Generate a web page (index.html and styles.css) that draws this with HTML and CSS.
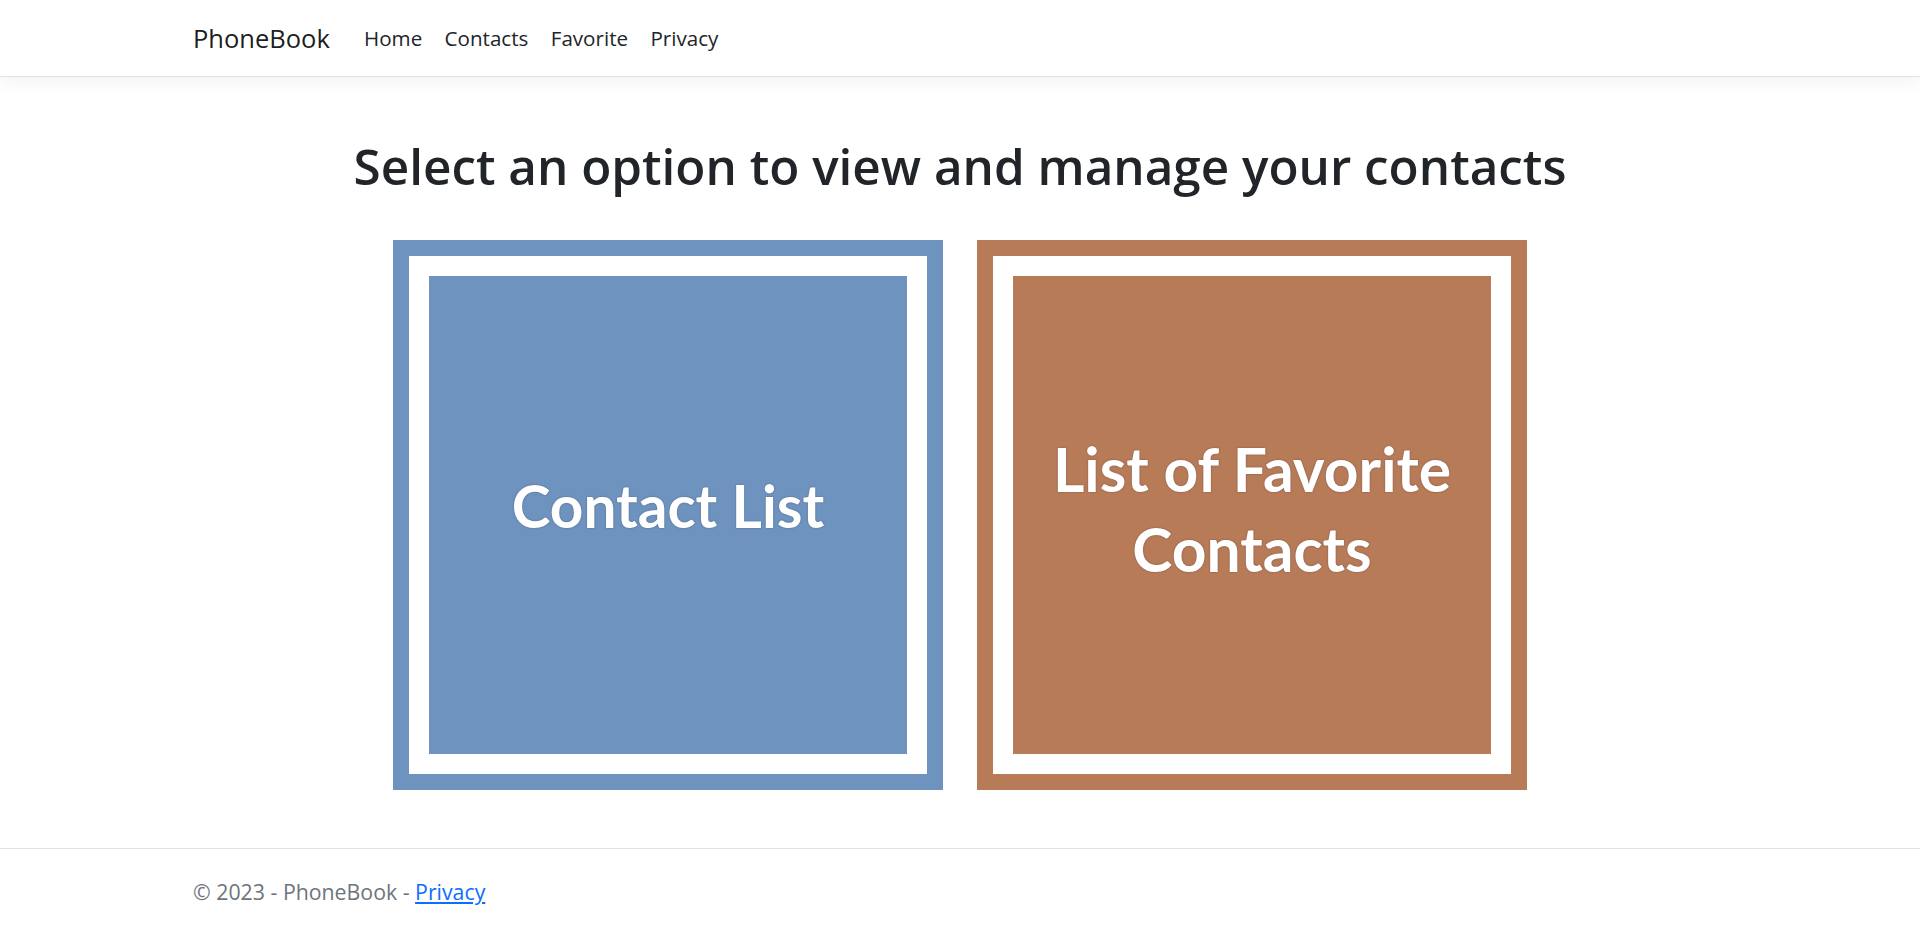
FILE: index.html
```html
<!DOCTYPE html>
<html lang="en">
<head>
<meta charset="utf-8">
<title>Home Page - PhoneBook</title>
<link rel="stylesheet" href="styles.css">
</head>
<body>
<div class="page">
  <header class="navbar">
    <div class="container nav-inner">
      <a class="brand" href="#">PhoneBook</a>
      <nav class="nav-links">
        <a class="nav-link" href="#">Home</a>
        <a class="nav-link" href="#">Contacts</a>
        <a class="nav-link" href="#">Favorite</a>
        <a class="nav-link" href="#">Privacy</a>
      </nav>
    </div>
  </header>
  <main class="main">
    <h1 class="title">Select an option to view and manage your contacts</h1>
    <div class="cards">
      <a class="card card-blue" href="#">
        <span class="frame"><span class="inner"><span class="card-text card-text-one">Contact List</span></span></span>
      </a>
      <a class="card card-brown" href="#">
        <span class="frame"><span class="inner"><span class="card-text card-text-two">List of Favorite<br>Contacts</span></span></span>
      </a>
    </div>
  </main>
  <footer class="footer">
    <div class="container footer-inner">© 2023 - PhoneBook - <a class="footer-link" href="#">Privacy</a></div>
  </footer>
</div>
</body>
</html>
```

FILE: styles.css
```css
html, body {
  margin: 0;
  padding: 0;
  background: #ffffff;
}

body {
  font-family: "Open Sans", "Noto Sans", sans-serif;
  color: #212529;
}

.page {
  display: flex;
  flex-direction: column;
  min-height: 928px;
}

.container {
  width: 1534px;
  margin: 0 auto;
}

.navbar {
  height: 76px;
  border-bottom: 1px solid #dee2e6;
  box-shadow: 0 5px 17px rgba(0, 0, 0, 0.05);
  background: #ffffff;
  display: flex;
  align-items: center;
}

.nav-inner {
  display: flex;
  align-items: center;
}

.brand {
  font-size: 25.5px;
  line-height: 36px;
  color: rgba(0, 0, 0, 0.9);
  text-decoration: none;
  margin-right: 23px;
}

.nav-links {
  display: flex;
  align-items: center;
}

.nav-link {
  font-size: 20.6px;
  line-height: 30px;
  color: #212529;
  text-decoration: none;
  padding: 0 11.2px;
}

.main {
  padding-top: 60px;
}

.title {
  margin: 0;
  text-align: center;
  font-size: 49.4px;
  line-height: 58px;
  font-weight: 600;
  color: #212529;
}

.cards {
  margin-top: 45px;
  display: flex;
  justify-content: center;
  gap: 34px;
}

.card {
  width: 550px;
  height: 550px;
  box-sizing: border-box;
  padding: 16px;
  display: block;
  text-decoration: none;
}

.card-blue { background: #6f93bf; }
.card-brown { background: #b87b58; }

.frame {
  display: block;
  width: 100%;
  height: 100%;
  box-sizing: border-box;
  border: 20px solid #ffffff;
}

.card-blue .frame { background: #6f93bf; }
.card-brown .frame { background: #b87b58; }

.inner {
  display: flex;
  width: 100%;
  height: 100%;
  align-items: center;
  justify-content: center;
  text-align: center;
}

.card-text {
  font-family: Lato, "Open Sans", sans-serif;
  font-weight: 700;
  color: #ffffff;
  text-shadow: 0 0 2px rgba(30, 40, 60, 0.45);
}

.card-text-one {
  font-size: 58.5px;
  line-height: 70px;
  margin-top: -20px;
}

.card-text-two {
  font-size: 60.5px;
  line-height: 80px;
  margin-top: -12px;
}

.footer {
  margin-top: 58px;
  border-top: 1px solid #dee2e6;
  padding-top: 28px;
}

.footer-inner {
  font-size: 21.3px;
  line-height: 30px;
  color: #6c757d;
}

.footer-link {
  color: #0d6efd;
  text-decoration: underline;
}
```
